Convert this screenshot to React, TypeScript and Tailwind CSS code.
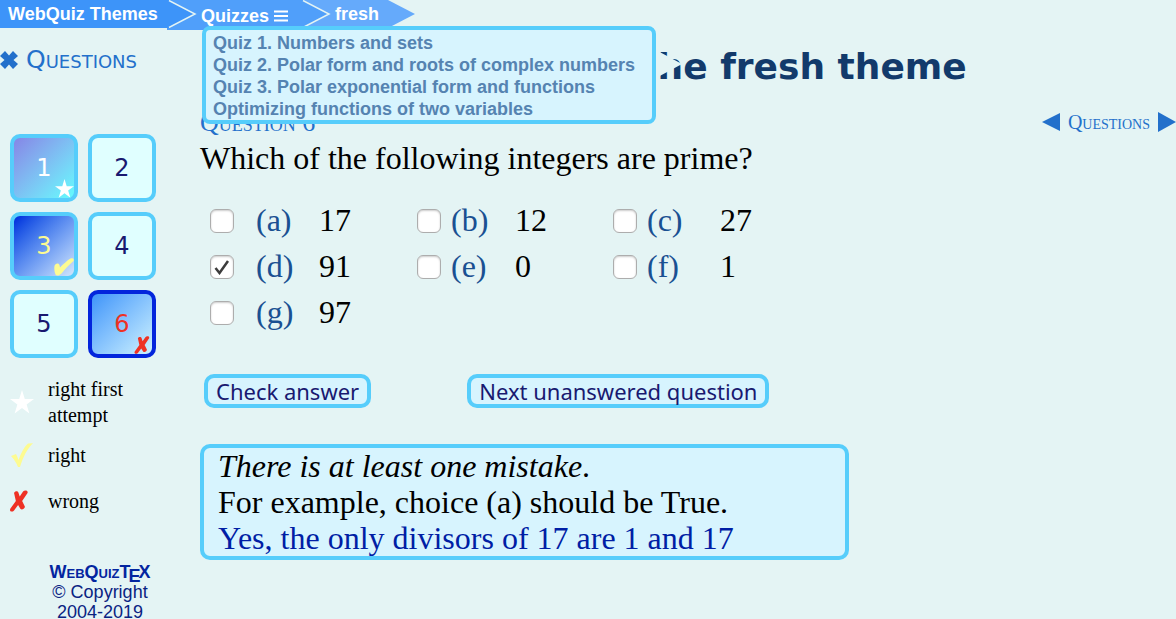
import { useState } from 'react'

const quizzes = [
  'Quiz 1. Numbers and sets',
  'Quiz 2. Polar form and roots of complex numbers',
  'Quiz 3. Polar exponential form and functions',
  'Optimizing functions of two variables'
]

const choices = [
  { id: 'a', value: 17 },
  { id: 'b', value: 12 },
  { id: 'c', value: 27 },
  { id: 'd', value: 91 },
  { id: 'e', value: 0 },
  { id: 'f', value: 1 },
  { id: 'g', value: 97 }
]

// label width for each of the three columns
const labelStyles = ['ml-[22px] w-[63px]', 'ml-2.5 w-16', 'ml-2.5 w-[73px]']

const questions = [
  { n: 1, status: 'star', style: 'border-[#56cdfb] bg-linear-to-br from-[#8585e6] to-[#62fbfd] text-white' },
  { n: 2, status: '', style: 'border-[#56cdfb] bg-[#e0ffff] text-[#191970]' },
  { n: 3, status: 'tick', style: 'border-[#56cdfb] bg-linear-to-br from-[#0325dc] to-[#d3e6fb] text-[#fdfb91]' },
  { n: 4, status: '', style: 'border-[#56cdfb] bg-[#e0ffff] text-[#191970]' },
  { n: 5, status: '', style: 'border-[#56cdfb] bg-[#e0ffff] text-[#191970]' },
  { n: 6, status: 'cross', style: 'border-[#0325dc] bg-linear-to-br from-[#3d94f9] to-[#cdf1fd] text-[#ee3124]' }
]

function Star({ className }: { className: string }) {
  return (
    <svg viewBox="0 0 24 24" className={className} fill="#fff" aria-hidden="true">
      <path d="M12 0l2.8 9.1H24l-7.4 5.5 2.8 9L12 18l-7.4 5.6 2.8-9L0 9.1h9.2z" />
    </svg>
  )
}

function HeavyTick({ className }: { className: string }) {
  return (
    <svg viewBox="0 0 20 18" className={className} fill="#fdfb91" aria-hidden="true">
      <path d="M.5 8C1 5 5 4.5 5.500 7L6 9.500C9 6.500 13 2.500 16.500 .5C18.500-.5 20.500 .8 19.500 3C15 7 11 11 8 15C6 17.500 2.500 18.500 1.500 16.500C.5 14 0 11 .5 8Z" />
    </svg>
  )
}

function Tick({ className }: { className: string }) {
  return (
    <svg viewBox="0 0 22 24" className={className} fill="#fdfb91" aria-hidden="true">
      <path d="M0 13L5 11C6 13 7 15 7.5 17C10 10 13 4 17 .5L22 .2C16 6 12 14 9 24L7 24C5.5 20 3 16 0 13Z" />
    </svg>
  )
}

function Cross({ className }: { className: string }) {
  return (
    <svg viewBox="0 0 20 24" className={className} fill="#ee3124" aria-hidden="true">
      <path d="M4.500 3C5.500 .8 9 .5 9.500 3L10.800 7L14.500 1.500C16 -.5 20.500 0 19.500 3L13.500 12L16.500 18C17 20.500 13 22.500 11.500 20.500L9 16.500L4.500 22.500C2.500 24.800 -1 24 .3 20.500L6.500 12Z" />
    </svg>
  )
}

function Chevron({ className }: { className: string }) {
  return (
    <svg viewBox="0 0 30 28" className={`h-7 w-[30px] shrink-0 ${className}`} aria-hidden="true">
      <path d="M0 0H2L28 14L2 28H0Z" />
      <path d="M2 .5L28 14L2 27.5" fill="none" stroke="#e4f4f4" strokeWidth="1.5" />
    </svg>
  )
}

export default function App() {
  const [checked, setChecked] = useState<string[]>(['d'])

  const toggle = (id: string) => {
    setChecked(checked.includes(id) ? checked.filter(c => c !== id) : [...checked, id])
  }

  return (
    <div className="min-h-screen bg-[#e4f4f4] font-['Liberation_Serif',serif] text-black">
      <nav className="flex h-[30px] items-start font-['Liberation_Sans',sans-serif] text-[18px] leading-7 font-bold text-white">
        <a href="#themes" className="h-7 w-[167px] bg-[#3d94f9] pl-2 whitespace-nowrap">WebQuiz Themes</a>
        <div className="relative flex h-[30px] w-[134px] bg-[#509ffa]">
          <Chevron className="fill-[#3d94f9]" />
          <button className="ml-1 flex items-center gap-[5px] pt-0.5 whitespace-nowrap">
            Quizzes
            <svg viewBox="0 0 14 12" className="h-3 w-3.5" stroke="#fff" strokeWidth="2" aria-hidden="true">
              <path d="M0 1.5H14M0 6H14M0 10.5H14" />
            </svg>
          </button>
          <ul className="absolute top-[26px] left-[35px] z-10 w-[454px] rounded-lg border-4 border-[#56cdfb] bg-[#d7f4fe] pt-0.5 pl-[7px] leading-[22px] text-[#5583b1]">
            {quizzes.map(quiz => (
              <li key={quiz} className="whitespace-nowrap"><a href="#quiz">{quiz}</a></li>
            ))}
          </ul>
          <svg viewBox="0 0 26 28" className="absolute top-[50px] left-[489px] z-10 h-7 w-[26px]" fill="#e4f4f4" aria-hidden="true">
            <path d="M0 0L26 14L0 28Z" />
          </svg>
        </div>
        <div className="flex h-7 bg-[#65aafb]">
          <Chevron className="fill-[#509ffa]" />
          <a href="#fresh" className="w-14 pl-1">fresh</a>
        </div>
        <svg viewBox="0 0 28 28" className="h-7 w-7" fill="#65aafb" aria-hidden="true">
          <path d="M0 0H1L28 14L3 27H0Z" />
        </svg>
      </nav>

      <div className="flex">
        <aside className="w-[200px] shrink-0">
          <h2 className="flex h-[60px] items-center gap-2 font-['DejaVu_Sans',sans-serif] text-[25px] text-[#2370cb] [font-variant:small-caps]">
            <svg viewBox="0 0 18 18" className="size-[18px]" fill="#2370cb" aria-hidden="true">
              <path d="M5 0L9 4.5L13 0L18 5L13.5 9L18 13L13 18L9 13.5L5 18L0 13L4.5 9L0 5Z" />
            </svg>
            Questions
          </h2>
          <div className="grid grid-cols-[68px_68px] gap-2.5 px-2.5 pt-11">
            {questions.map(q => (
              <button key={q.n} className={`relative h-[68px] rounded-[10px] border-4 font-['DejaVu_Sans',sans-serif] text-[24px] ${q.style}`}>
                {q.n}
                {q.status === 'star' && <Star className="absolute right-0 bottom-0 size-[19px]" />}
                {q.status === 'tick' && <HeavyTick className="absolute right-0 bottom-0 h-[18px] w-5" />}
                {q.status === 'cross' && <Cross className="absolute right-0.5 bottom-0 h-[18px] w-4" />}
              </button>
            ))}
          </div>
          <ul className="mt-[18px] pl-2.5 text-[20px] leading-[26px]">
            <li className="flex items-center gap-3.5"><Star className="size-6" /><span className="w-24">right first attempt</span></li>
            <li className="mt-3.5 flex items-center gap-3.5"><Tick className="size-6" />right</li>
            <li className="mt-5 flex items-center gap-5"><Cross className="h-6 w-[18px]" />wrong</li>
          </ul>
          <footer className="mt-12 text-center font-['Liberation_Sans',sans-serif] text-[18px] leading-5 text-[#0a2382]">
            <div className="h-5 font-bold text-[#0325a0] [font-variant:small-caps]">
              WebQuizT<span className="-mx-0.5 align-[-4px] leading-none">E</span>X
            </div>
            <div>© Copyright</div>
            <div>2004-2019</div>
          </footer>
        </aside>

        <main className="min-w-0 flex-1">
          <h1 className="mt-2.5 ml-[433px] font-['DejaVu_Sans',sans-serif] text-[36px] leading-[54px] font-bold whitespace-nowrap text-[#123a6b]">The fresh theme</h1>
          <div className="mt-2.5 flex h-9 items-center justify-between text-[#2370cb] [font-variant:small-caps]">
            <h2 className="text-[26px]">Question 6</h2>
            <div className="flex items-center gap-2 text-[20px]">
              <button aria-label="Previous question">
                <svg viewBox="0 0 18 18" className="size-[18px]" fill="#2370cb"><path d="M0 9L18 0V18Z" /></svg>
              </button>
              Questions
              <button aria-label="Next question">
                <svg viewBox="0 0 18 20" className="h-5 w-[18px]" fill="#2370cb"><path d="M18 10L0 0V20Z" /></svg>
              </button>
            </div>
          </div>
          <p className="text-[32px] leading-9">Which of the following integers are prime?</p>

          <div className="mt-[21px] grid grid-cols-[207px_196px_200px] pl-2.5 text-[32px]">
            {choices.map((c, i) => (
              <label key={c.id} className="flex h-[46px] items-center">
                <span className="mt-0.5 grid size-6 shrink-0 place-items-center">
                  <input
                    type="checkbox"
                    checked={checked.includes(c.id)}
                    onChange={() => toggle(c.id)}
                    className="peer col-start-1 row-start-1 size-6 appearance-none rounded-md border border-[#adadad] bg-white shadow-[inset_0_1px_2px_#ccc]"
                  />
                  <svg viewBox="0 0 16 16" className="pointer-events-none col-start-1 row-start-1 hidden size-4 peer-checked:block" fill="none" stroke="#3c3c3c" strokeWidth="2.5" aria-hidden="true">
                    <path d="M1.5 9L5.5 14L14 2" />
                  </svg>
                </span>
                <span className={`shrink-0 text-[#1a5092] ${labelStyles[i % 3]}`}>({c.id})</span>
                <span>{c.value}</span>
              </label>
            ))}
          </div>

          <div className="mt-[39px] ml-1 flex gap-24 font-['Noto_Sans',sans-serif] text-[22px] leading-[26px] text-[#191970]">
            <button className="rounded-[10px] border-4 border-[#56cdfb] bg-[#d7f4fe] px-2 whitespace-nowrap">Check answer</button>
            <button className="rounded-[10px] border-4 border-[#56cdfb] bg-[#d7f4fe] px-2 whitespace-nowrap">Next unanswered question</button>
          </div>

          <div className="mt-9 w-[649px] max-w-full rounded-[10px] border-4 border-[#56cdfb] bg-[#d7f4fe] px-3.5 text-[32px] leading-9">
            <p><em>There is at least one mistake</em>.</p>
            <p>For example, choice (a) should be True.</p>
            <p className="text-[#001ea5]">Yes, the only divisors of 17 are 1 and 17</p>
          </div>
        </main>
      </div>
    </div>
  )
}
